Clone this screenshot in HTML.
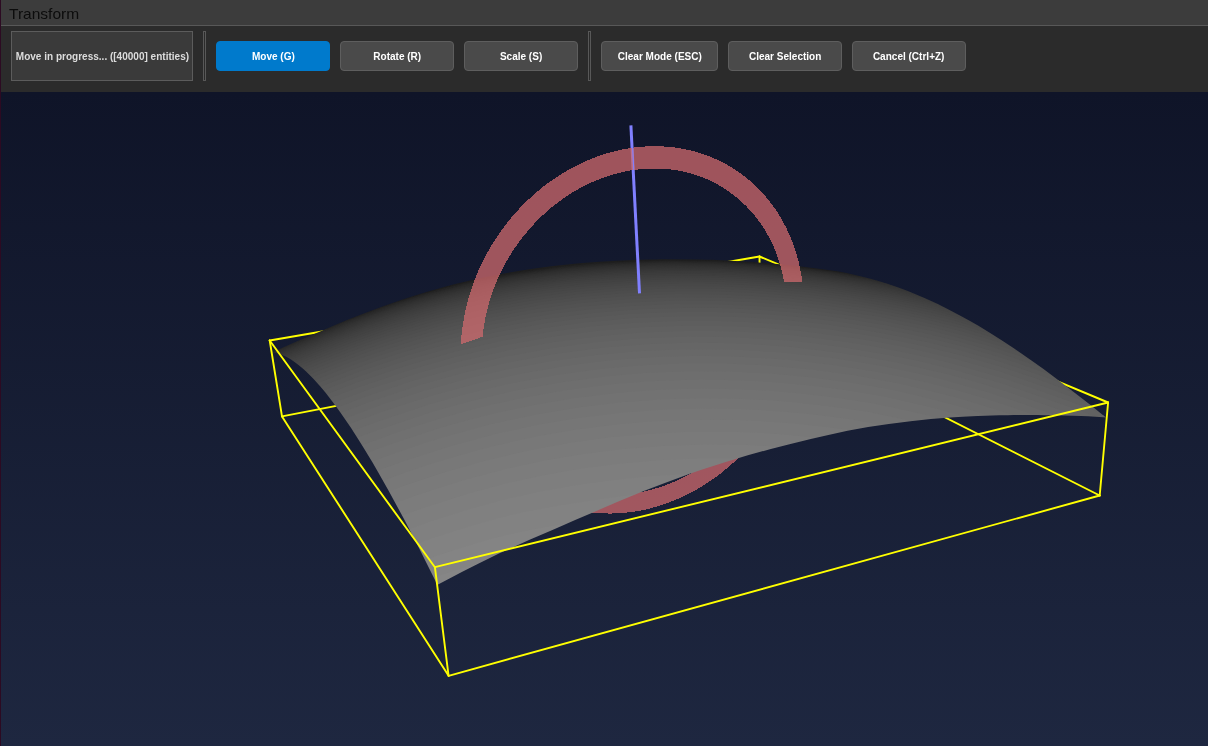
<!DOCTYPE html>
<html><head><meta charset="utf-8"><title>Transform</title>
<style>
html,body{margin:0;padding:0;background:#2b2b2b;}
body{width:1208px;height:746px;overflow:hidden;position:relative;font-family:"Liberation Sans",sans-serif;}
.edge{position:absolute;left:0;top:0;width:1px;height:746px;background:#2c0a22;z-index:5;}
.title{position:absolute;left:0;top:0;width:1208px;height:25px;background:#3c3c3c;border-bottom:1px solid #585858;box-sizing:content-box;}
.title span{position:absolute;left:9px;top:4.8px;font-size:14.5px;line-height:18px;color:#0c0c0c;display:inline-block;transform:scaleX(1.07);transform-origin:0 50%;}
.bar{position:absolute;left:0;top:26px;width:1208px;height:66px;background:#2b2b2b;}
.lbl{position:absolute;left:11px;top:5px;width:180px;height:48px;border:1px solid #5c5c5c;background:#3a3a3a;color:#dcdcdc;}
.sep{position:absolute;top:5px;width:1px;height:48px;border:1px solid #585858;background:#2b2b2b;}
.btn{position:absolute;top:15px;height:28px;border:1px solid #5e5e5e;border-radius:4px;background:#4a4a4a;color:#fff;}
.btn.on{background:#007acc;border-color:#007acc;}
.t{position:absolute;left:0;right:0;top:50%;margin-top:-8px;line-height:16px;height:16px;display:flex;justify-content:center;font-weight:bold;font-size:11.4px;white-space:nowrap;}
.t i{font-style:normal;display:inline-block;transform:scaleX(0.88);transform-origin:50% 50%;}
.scene{position:absolute;left:0;top:92px;display:block;}
</style></head><body>
<div class="title"><span>Transform</span></div>
<div class="bar">
<div class="lbl"><div class="t"><i>Move in progress... ([40000] entities)</i></div></div>
<div class="sep" style="left:203px"></div>
<div class="btn on" style="left:216px;width:112px"><div class="t"><i>Move (G)</i></div></div>
<div class="btn" style="left:340px;width:112px"><div class="t"><i>Rotate (R)</i></div></div>
<div class="btn" style="left:464px;width:112px"><div class="t"><i>Scale (S)</i></div></div>
<div class="sep" style="left:588px"></div>
<div class="btn" style="left:601px;width:115px"><div class="t"><i>Clear Mode (ESC)</i></div></div>
<div class="btn" style="left:728px;width:112px"><div class="t"><i>Clear Selection</i></div></div>
<div class="btn" style="left:852px;width:112px"><div class="t"><i>Cancel (Ctrl+Z)</i></div></div>
</div>
<svg class="scene" width="1208" height="654" viewBox="0 92 1208 654">
<defs><linearGradient id="bg" x1="0" y1="92" x2="0" y2="746" gradientUnits="userSpaceOnUse"><stop offset="0" stop-color="#0f1428"/><stop offset="1" stop-color="#1e2740"/></linearGradient>
<mask id="sc" maskUnits="userSpaceOnUse" x="250" y="240" width="880" height="370"><polygon points="271.83,352.59 274.52,352.70 274.85,352.87 276.17,353.05 278.50,353.64 282.17,354.91 286.17,356.74 290.17,358.99 293.83,361.38 298.17,364.63 302.17,367.96 305.83,371.32 313.14,378.60 320.33,386.56 325.62,392.87 329.83,398.18 335.37,405.50 340.21,412.17 350.93,427.83 359.50,441.17 364.47,449.17 372.70,462.83 378.15,472.17 388.35,490.17 403.70,518.50 416.74,543.50 435.73,581.49 435.90,582.15 436.46,583.12 436.50,583.45 436.79,583.78 436.82,584.12 437.14,584.47 437.17,584.83 437.53,584.81 437.88,584.48 438.22,584.45 438.55,584.16 439.53,583.78 461.83,572.09 476.17,564.80 499.50,553.21 530.17,539.53 554.17,529.22 575.17,519.97 595.83,511.17 619.50,500.96 642.50,491.50 666.17,482.44 689.17,474.09 701.50,469.86 724.17,462.48 747.83,455.31 770.83,448.97 789.50,444.15 811.83,438.72 829.50,434.69 847.50,430.86 868.17,427.08 888.83,423.97 910.50,421.15 930.83,419.05 950.17,417.53 962.50,416.74 977.50,415.99 999.50,415.29 1007.50,415.34 1013.50,415.01 1037.83,414.89 1044.50,415.16 1052.50,415.19 1073.50,415.67 1088.17,416.16 1103.15,417.15 1103.47,417.34 1105.83,417.42 1104.78,416.40 1104.45,416.34 1103.15,415.12 1102.82,414.97 1091.17,405.56 1080.83,397.50 1069.17,388.46 1055.17,377.74 1043.50,369.04 1031.83,360.67 1014.17,348.54 1003.17,341.27 990.17,332.99 978.83,326.11 970.50,321.32 961.83,316.47 949.50,309.88 937.83,304.11 924.50,298.06 907.83,291.10 899.83,288.12 887.50,283.85 876.83,280.54 869.50,278.46 860.50,276.14 847.83,273.32 838.83,271.60 831.83,270.46 820.83,268.88 807.17,267.15 795.17,265.79 782.50,264.52 768.83,263.31 753.17,262.09 739.17,261.17 727.17,260.55 711.50,259.81 704.83,259.73 699.17,259.41 661.17,259.22 655.83,259.46 649.17,259.44 633.50,259.96 616.83,260.74 599.50,261.75 582.17,263.09 569.50,264.27 550.83,266.30 536.17,268.26 521.17,270.51 506.83,272.93 486.83,276.81 472.17,279.99 453.17,284.61 445.83,286.51 426.50,291.99 414.17,295.74 401.83,299.70 382.50,306.40 359.83,314.91 345.83,320.56 332.83,326.01 316.50,332.92 302.83,338.72 283.50,347.30 274.52,351.50 273.87,351.63 272.89,352.22 272.55,352.24 272.20,352.57" fill="#fff"/></mask></defs>
<rect x="0" y="92" width="1208" height="654" fill="url(#bg)"/>
<g stroke="#ffff00" stroke-width="1.9" fill="none" stroke-linecap="round">
<line x1="759.5" y1="256.5" x2="269.7" y2="340.5" />
<line x1="759.5" y1="256.5" x2="1108.1" y2="402.5" />
<line x1="759.5" y1="256.5" x2="759.9" y2="323.8" />
<line x1="282.0" y1="416.4" x2="759.9" y2="323.8" />
<line x1="1099.7" y1="495.5" x2="759.9" y2="323.8" />
</g>
<polygon points="460.8,344.4 460.7,348.6 460.6,352.8 460.6,356.9 460.7,361.0 460.9,365.2 461.2,369.2 461.6,373.3 462.0,377.3 462.6,381.3 463.2,385.3 463.9,389.2 464.7,393.1 465.6,397.0 466.6,400.8 467.6,404.6 468.7,408.4 470.0,412.1 471.2,415.7 472.6,419.3 474.1,422.9 475.6,426.4 477.2,429.8 478.9,433.2 480.6,436.6 482.4,439.8 484.3,443.1 486.3,446.2 488.3,449.3 490.4,452.4 492.5,455.3 494.8,458.3 497.0,461.1 499.4,463.9 501.8,466.6 504.2,469.2 506.8,471.8 509.3,474.3 512.0,476.7 514.7,479.1 517.4,481.4 520.2,483.6 523.0,485.7 525.9,487.7 528.8,489.7 531.7,491.6 534.7,493.4 537.8,495.2 540.9,496.9 544.0,498.5 547.1,500.0 550.3,501.4 553.5,502.8 556.8,504.0 560.1,505.2 563.4,506.3 566.7,507.4 570.1,508.3 573.4,509.2 576.8,510.0 580.3,510.7 583.7,511.3 587.1,511.9 590.6,512.4 594.1,512.7 597.6,513.1 601.1,513.3 604.6,513.4 608.1,513.5 611.6,513.5 615.2,513.4 618.7,513.3 622.2,513.0 625.8,512.7 629.3,512.3 632.8,511.8 636.3,511.3 639.9,510.7 643.4,510.0 646.9,509.2 650.4,508.3 653.9,507.4 657.3,506.4 660.8,505.3 664.2,504.2 667.6,503.0 671.0,501.7 674.4,500.4 677.8,498.9 681.1,497.5 684.5,495.9 687.8,494.3 691.0,492.6 694.3,490.8 697.5,489.0 700.7,487.1 703.8,485.2 707.0,483.2 710.1,481.1 713.1,479.0 716.2,476.8 719.2,474.6 722.1,472.3 725.0,469.9 727.9,467.5 730.8,465.0 733.6,462.5 736.3,459.9 739.0,457.3 741.7,454.6 744.3,451.9 746.9,449.1 749.5,446.3 751.9,443.4 754.4,440.5 756.8,437.5 759.1,434.5 761.4,431.5 763.6,428.4 765.8,425.3 768.0,422.1 770.0,418.9 772.1,415.7 774.0,412.4 775.9,409.1 777.8,405.7 779.6,402.4 781.3,399.0 783.0,395.5 784.6,392.1 786.2,388.6 787.7,385.1 789.1,381.5 790.5,378.0 791.8,374.4 793.0,370.8 794.2,367.2 795.3,363.5 796.3,359.9 797.3,356.2 798.2,352.5 799.1,348.9 799.9,345.1 800.6,341.4 801.2,337.7 801.8,334.0 802.3,330.3 802.7,326.5 803.1,322.8 803.4,319.0 803.6,315.3 803.7,311.6 803.8,307.8 803.8,304.1 803.8,300.4 803.6,296.7 803.4,293.0 803.1,289.3 802.8,285.6 802.3,281.9 784.1,281.9 784.6,285.2 785.1,288.5 785.5,291.9 785.8,295.2 786.1,298.6 786.3,302.0 786.4,305.4 786.5,308.8 786.5,312.2 786.4,315.6 786.2,319.0 786.0,322.4 785.7,325.8 785.4,329.3 785.0,332.7 784.5,336.1 784.0,339.5 783.4,342.9 782.7,346.3 781.9,349.7 781.1,353.0 780.3,356.4 779.4,359.8 778.4,363.1 777.3,366.4 776.2,369.7 775.0,373.0 773.8,376.3 772.5,379.5 771.2,382.7 769.7,385.9 768.3,389.1 766.8,392.3 765.2,395.4 763.5,398.5 761.8,401.5 760.1,404.6 758.3,407.6 756.4,410.5 754.5,413.5 752.6,416.4 750.6,419.2 748.5,422.0 746.4,424.8 744.3,427.6 742.1,430.3 739.8,432.9 737.5,435.6 735.2,438.1 732.8,440.7 730.4,443.1 727.9,445.6 725.4,448.0 722.9,450.3 720.3,452.6 717.7,454.8 715.0,457.0 712.3,459.1 709.6,461.2 706.8,463.2 704.0,465.2 701.2,467.1 698.3,469.0 695.5,470.7 692.5,472.5 689.6,474.2 686.6,475.8 683.6,477.3 680.6,478.8 677.6,480.2 674.5,481.6 671.5,482.9 668.4,484.1 665.2,485.3 662.1,486.4 659.0,487.4 655.8,488.4 652.6,489.3 649.5,490.1 646.3,490.9 643.1,491.6 639.8,492.2 636.6,492.7 633.4,493.2 630.2,493.6 627.0,493.9 623.7,494.2 620.5,494.4 617.3,494.5 614.1,494.5 610.9,494.5 607.7,494.4 604.5,494.2 601.3,493.9 598.1,493.6 594.9,493.2 591.8,492.7 588.7,492.2 585.5,491.5 582.4,490.8 579.4,490.0 576.3,489.2 573.3,488.2 570.3,487.2 567.3,486.1 564.3,485.0 561.4,483.8 558.5,482.5 555.6,481.1 552.8,479.6 550.0,478.1 547.2,476.5 544.5,474.8 541.8,473.1 539.2,471.3 536.6,469.4 534.0,467.5 531.5,465.4 529.1,463.3 526.7,461.2 524.3,459.0 522.0,456.7 519.7,454.3 517.5,451.9 515.3,449.4 513.2,446.9 511.2,444.3 509.2,441.6 507.3,438.9 505.4,436.1 503.6,433.3 501.9,430.4 500.2,427.4 498.6,424.4 497.1,421.3 495.6,418.2 494.2,415.1 492.9,411.9 491.6,408.6 490.4,405.3 489.3,402.0 488.3,398.6 487.3,395.2 486.4,391.8 485.6,388.3 484.9,384.8 484.2,381.2 483.7,377.6 483.2,374.0 482.7,370.4 482.4,366.7 482.1,363.0 482.0,359.3 481.9,355.6 481.9,351.9 481.9,348.1 482.1,344.3 482.3,340.5 482.6,336.8" fill="rgba(207,106,109,0.75)" shape-rendering="crispEdges"/>
<g mask="url(#sc)">
<rect x="250" y="240" width="880" height="370" fill="#1e1e1e"/>
<polygon points="665.5,260.2 636.2,260.9 601.8,262.7 572.5,265.1 540.5,268.8 503.8,274.5 463.5,282.8 435.8,289.7 416.5,295.5 415.5,295.1 415.2,295.8 413.2,296.5 412.2,296.2 410.8,297.2 409.8,296.8 408.5,297.8 407.8,297.5 407.5,298.2 406.5,297.5 406.2,298.5 405.5,297.9 405.2,298.9 404.5,298.2 404.2,299.2 403.2,298.6 402.8,299.6 402.2,298.9 401.8,299.9 401.2,299.3 400.8,300.3 400.2,299.6 399.8,300.6 398.8,299.6 397.8,297.0 361.2,310.2 316.5,328.8 273.8,347.6 271.8,348.6 267.8,352.6 271.8,356.6 274.5,356.6 280.2,357.9 288.2,361.6 293.5,365.0 300.8,370.6 311.5,380.9 316.5,386.6 335.2,410.5 356.5,442.5 374.5,472.5 406.5,531.2 433.2,584.8 437.2,588.8 471.5,571.0 530.8,543.1 573.8,524.4 622.2,503.7 666.5,486.2 703.5,473.1 746.8,459.4 787.5,448.5 829.2,438.6 866.8,431.1 910.2,425.0 945.8,421.7 971.2,420.1 997.8,419.2 1041.8,418.9 1074.8,419.6 1105.8,421.4 1109.8,417.4 1104.8,412.4 1088.8,399.5 1053.2,372.0 1024.8,351.6 995.5,332.2 962.8,312.9 936.2,299.2 910.8,288.1 889.2,280.3 870.8,274.7 848.2,269.2 846.8,269.3 846.5,271.3 845.2,273.0 844.8,270.0 844.2,272.3 843.2,272.7 842.8,271.0 842.2,272.4 841.2,272.4 807.2,267.7 760.2,263.3 713.5,260.8" fill="#202020"/>
<polygon points="667.5,260.6 619.8,262.1 595.2,263.6 564.8,266.3 520.5,272.1 490.8,277.4 465.2,282.8 423.8,293.4 392.5,303.4 391.5,303.1 391.2,303.7 389.5,303.7 389.2,304.4 387.5,304.4 387.2,305.1 386.5,304.8 386.2,305.5 384.5,305.5 384.2,306.2 383.5,305.8 382.2,306.9 381.2,306.2 380.8,307.2 380.2,306.5 379.8,307.5 379.2,306.9 378.8,307.9 376.8,304.6 373.2,305.6 338.5,319.5 302.5,334.7 271.8,348.6 267.8,352.6 271.8,356.6 274.5,356.6 280.2,357.9 288.2,361.6 293.5,365.0 300.8,370.6 311.5,380.9 316.5,386.6 335.2,410.5 356.5,442.5 374.5,472.5 406.5,531.2 433.2,584.8 437.2,588.8 471.5,571.0 530.8,543.1 573.8,524.4 622.2,503.7 666.5,486.2 703.5,473.1 746.8,459.4 787.5,448.5 829.2,438.6 866.8,431.1 910.2,425.0 945.8,421.7 971.2,420.1 997.8,419.2 1041.8,418.9 1074.8,419.6 1105.8,421.4 1109.8,417.4 1104.8,412.4 1088.8,399.5 1053.2,372.0 1024.8,351.6 995.5,332.2 962.8,312.9 936.2,299.2 910.8,288.1 889.2,280.3 870.8,274.7 852.2,270.1 851.2,270.2 850.2,273.5 849.2,273.9 848.8,272.9 848.5,273.6 847.5,273.6 847.2,272.6 846.8,273.3 845.5,273.3 807.5,268.0 760.2,263.6 712.8,261.1" fill="#222222"/>
<polygon points="674.5,260.9 647.2,261.4 621.5,262.4 592.8,264.2 568.5,266.3 523.2,272.2 471.5,281.8 441.5,289.0 411.5,297.5 382.5,306.8 364.5,313.5 363.8,313.2 363.5,313.8 361.8,313.9 361.5,314.6 360.2,314.6 359.8,315.3 359.2,314.9 358.8,315.6 358.2,315.3 357.8,316.0 357.2,315.3 356.8,316.3 356.2,315.7 356.2,316.4 355.5,316.4 355.2,317.0 354.5,316.4 354.2,317.4 353.5,316.8 353.2,317.8 351.2,314.5 351.8,316.5 351.5,318.5 349.5,315.2 348.8,315.2 316.5,328.8 283.2,343.3 271.8,348.6 267.8,352.6 271.8,356.6 274.5,356.6 280.2,357.9 288.2,361.6 293.5,365.0 300.8,370.6 311.5,380.9 316.5,386.6 335.2,410.5 356.5,442.5 374.5,472.5 406.5,531.2 433.2,584.8 437.2,588.8 471.5,571.0 530.8,543.1 573.8,524.4 622.2,503.7 666.5,486.2 703.5,473.1 746.8,459.4 787.5,448.5 829.2,438.6 866.8,431.1 910.2,425.0 945.8,421.7 971.2,420.1 997.8,419.2 1041.8,418.9 1074.8,419.6 1105.8,421.4 1109.8,417.4 1104.8,412.4 1088.8,399.5 1053.2,372.0 1024.8,351.6 995.5,332.2 962.8,312.9 936.2,299.2 910.8,288.1 892.8,281.5 875.2,275.9 856.2,271.0 855.2,271.1 854.2,274.4 853.2,274.8 852.8,273.8 852.5,274.5 851.2,274.5 835.2,271.9 814.8,269.2 767.5,264.6 720.2,261.8" fill="#242424"/>
<polygon points="663.5,261.5 636.2,262.3 610.2,263.5 559.5,267.8 511.2,274.7 466.5,283.5 428.5,293.1 394.5,303.3 358.5,316.0 337.5,324.5 335.8,324.5 335.5,325.2 334.2,325.2 333.8,325.9 333.2,325.6 332.2,326.6 330.8,326.7 330.5,327.3 329.8,326.7 329.5,327.7 327.5,324.4 328.2,326.4 327.8,328.4 325.8,325.1 326.5,328.8 326.2,329.1 325.2,328.1 324.2,325.8 324.8,327.8 324.5,329.8 322.5,326.5 320.5,327.1 273.8,347.6 271.8,348.6 267.8,352.6 271.8,356.6 274.5,356.6 280.2,357.9 288.2,361.6 293.5,365.0 300.8,370.6 311.5,380.9 316.5,386.6 335.2,410.5 356.5,442.5 374.5,472.5 406.5,531.2 433.2,584.8 437.2,588.8 471.5,571.0 530.8,543.1 573.8,524.4 622.2,503.7 666.5,486.2 703.5,473.1 746.8,459.4 787.5,448.5 829.2,438.6 866.8,431.1 910.2,425.0 945.8,421.7 971.2,420.1 997.8,419.2 1041.8,418.9 1074.8,419.6 1105.8,421.4 1109.8,417.4 1104.8,412.4 1088.8,399.5 1053.2,372.0 1024.8,351.6 995.5,332.2 962.8,312.9 936.2,299.2 910.8,288.1 889.2,280.3 861.5,272.2 860.5,272.3 859.5,275.6 858.5,276.0 858.2,275.0 857.8,275.7 856.8,275.7 836.8,272.5 811.8,269.3 770.2,265.2 743.8,263.4 716.5,262.1" fill="#262626"/>
<polygon points="659.5,262.2 609.2,264.2 561.5,268.2 518.2,274.1 470.5,283.2 425.8,294.4 385.8,306.8 343.5,322.3 310.8,335.7 310.2,335.4 309.2,336.4 308.5,336.1 308.2,336.7 306.8,336.7 306.5,337.4 306.2,337.1 305.2,338.1 304.5,337.7 303.5,338.7 302.8,338.0 302.8,338.7 302.2,338.7 301.8,339.4 301.5,339.0 301.2,339.7 299.2,336.4 299.8,338.4 299.5,340.4 297.5,337.0 296.5,337.4 271.8,348.6 267.8,352.6 271.8,356.6 274.5,356.6 280.2,357.9 288.2,361.6 293.5,365.0 300.8,370.6 311.5,380.9 316.5,386.6 335.2,410.5 356.5,442.5 374.5,472.5 406.5,531.2 433.2,584.8 437.2,588.8 471.5,571.0 530.8,543.1 573.8,524.4 622.2,503.7 666.5,486.2 703.5,473.1 746.8,459.4 787.5,448.5 829.2,438.6 866.8,431.1 910.2,425.0 945.8,421.7 971.2,420.1 997.8,419.2 1041.8,418.9 1074.8,419.6 1105.8,421.4 1109.8,417.4 1104.8,412.4 1088.8,399.5 1053.2,372.0 1024.8,351.6 995.5,332.2 962.8,312.9 936.2,299.2 910.8,288.1 889.2,280.3 866.2,273.4 865.5,273.8 864.5,276.8 863.5,277.2 863.2,276.2 862.8,276.9 861.5,276.9 840.2,273.4 813.2,269.9 771.8,265.8 746.2,264.1 719.8,262.8" fill="#282828"/>
<polygon points="676.8,262.6 648.5,263.1 622.8,264.1 572.2,267.8 544.8,270.9 518.2,274.8 488.8,280.0 464.8,285.1 436.8,292.0 411.8,299.2 385.8,307.5 353.5,319.1 309.2,336.7 280.8,349.0 280.2,348.6 279.8,349.3 279.5,349.0 277.8,350.3 277.2,349.9 274.8,351.6 274.2,350.9 273.8,351.9 273.5,351.6 273.2,352.3 272.2,352.3 272.2,356.6 276.5,356.9 283.5,359.3 291.5,363.6 300.8,370.6 311.5,380.9 316.5,386.6 326.5,398.9 336.8,412.8 356.5,442.5 378.5,479.5 406.5,531.2 433.2,584.8 437.2,588.8 471.5,571.0 530.8,543.1 573.8,524.4 622.2,503.7 666.5,486.2 703.5,473.1 746.8,459.4 787.5,448.5 829.2,438.6 866.8,431.1 910.2,425.0 945.8,421.7 971.2,420.1 997.8,419.2 1041.8,418.9 1074.8,419.6 1105.8,421.4 1109.8,417.4 1104.8,412.4 1088.8,399.5 1053.2,372.0 1024.8,351.6 995.5,332.2 962.8,312.9 936.2,299.2 910.8,288.1 889.2,280.3 871.8,275.0 871.2,275.0 870.8,277.0 869.5,278.7 869.2,277.7 868.8,278.4 867.8,278.4 828.2,272.3 776.2,266.8 729.2,263.8" fill="#2a2a2a"/>
<polygon points="660.5,263.5 609.8,265.5 584.8,267.4 557.2,270.1 509.5,277.0 458.2,287.4 437.2,292.7 403.2,302.6 362.2,316.5 344.5,323.3 306.8,338.4 273.5,352.6 273.5,356.6 280.2,357.9 288.2,361.6 295.8,366.6 303.5,373.0 311.5,380.9 318.2,388.6 336.8,412.8 356.5,442.5 378.5,479.5 406.5,531.2 433.2,584.8 437.2,588.8 471.5,571.0 530.8,543.1 573.8,524.4 622.2,503.7 666.5,486.2 703.5,473.1 746.8,459.4 787.5,448.5 829.2,438.6 866.8,431.1 910.2,425.0 945.8,421.7 971.2,420.1 997.8,419.2 1041.8,418.9 1074.8,419.6 1105.8,421.4 1109.8,417.4 1104.8,412.4 1088.8,399.5 1053.2,372.0 1024.8,351.6 995.5,332.2 962.8,312.9 936.2,299.2 910.8,288.1 889.2,280.3 877.2,276.5 875.8,279.9 875.2,280.2 874.8,278.6 874.2,279.9 873.5,279.9 855.2,276.7 819.2,271.8 795.5,269.2 765.2,266.6 735.5,264.8 710.2,263.8" fill="#2c2c2c"/>
<polygon points="666.2,264.2 616.2,266.0 586.2,268.1 560.8,270.5 533.5,274.0 506.8,278.3 457.5,288.4 429.2,295.8 401.5,303.9 353.2,320.8 323.8,332.5 280.5,350.3 274.8,352.9 274.2,353.6 273.5,356.6 280.2,357.9 288.2,361.6 295.8,366.6 303.5,373.0 311.5,380.9 318.2,388.6 336.8,412.8 356.5,442.5 378.5,479.5 406.5,531.2 433.2,584.8 437.2,588.8 471.5,571.0 530.8,543.1 573.8,524.4 622.2,503.7 666.5,486.2 703.5,473.1 746.8,459.4 787.5,448.5 829.2,438.6 866.8,431.1 910.2,425.0 945.8,421.7 971.2,420.1 997.8,419.2 1041.8,418.9 1074.8,419.6 1105.8,421.4 1109.8,417.4 1104.8,412.4 1088.8,399.5 1053.2,372.0 1024.8,351.6 995.5,332.2 962.8,312.9 936.2,299.2 910.8,288.1 889.2,280.3 882.2,278.1 880.8,281.4 880.2,281.8 879.8,280.8 879.5,281.5 878.5,281.5 858.8,278.0 828.2,273.7 797.8,270.1 764.2,267.3 717.8,264.8" fill="#2e2e2e"/>
<polygon points="661.2,265.2 610.5,267.2 560.2,271.5 537.2,274.4 506.5,279.3 455.8,289.8 426.5,297.4 400.2,305.3 369.2,315.7 346.5,324.3 311.8,338.1 276.5,352.9 275.5,356.9 280.2,357.9 288.2,361.6 295.8,366.6 303.5,373.0 311.5,380.9 321.5,392.5 339.2,416.2 356.5,442.5 378.5,479.5 406.5,531.2 433.2,584.8 437.2,588.8 471.5,571.0 530.8,543.1 573.8,524.4 622.2,503.7 666.5,486.2 703.5,473.1 746.8,459.4 787.5,448.5 829.2,438.6 866.8,431.1 910.2,425.0 945.8,421.7 971.2,420.1 997.8,419.2 1041.8,418.9 1074.8,419.6 1105.8,421.4 1109.8,417.4 1104.8,412.4 1088.8,399.5 1053.2,372.0 1024.8,351.6 995.5,332.2 962.8,312.9 936.2,299.2 910.8,288.1 889.2,280.3 887.2,279.6 885.8,283.0 884.8,283.3 854.5,278.1 817.8,273.2 787.5,269.9 757.5,267.6 711.2,265.4" fill="#303030"/>
<polygon points="678.5,265.9 650.2,266.4 624.2,267.4 573.5,271.1 521.2,277.8 489.8,283.4 467.2,288.2 440.2,294.7 412.5,302.5 378.2,313.6 354.8,322.1 318.5,336.4 279.5,352.6 277.5,354.3 276.8,357.3 280.2,357.9 288.2,361.6 295.8,366.6 303.5,373.0 311.5,380.9 321.5,392.5 339.2,416.2 356.5,442.5 378.5,479.5 406.5,531.2 433.2,584.8 437.2,588.8 471.5,571.0 530.8,543.1 573.8,524.4 622.2,503.7 666.5,486.2 703.5,473.1 746.8,459.4 787.5,448.5 829.2,438.6 866.8,431.1 910.2,425.0 945.8,421.7 971.2,420.1 997.8,419.2 1041.8,418.9 1074.8,419.6 1105.8,421.4 1109.8,417.4 1104.8,412.4 1088.8,399.5 1053.2,372.0 1031.2,356.0 1003.5,337.3 978.8,322.0 952.2,307.1 926.2,294.6 895.5,282.4 893.5,282.2 892.8,284.5 891.8,285.5 891.5,284.5 891.2,285.2 890.5,285.2 866.5,280.8 830.5,275.6 803.2,272.4 774.8,269.8 723.2,266.8" fill="#323232"/>
<polygon points="662.8,267.2 611.5,269.2 563.5,273.2 512.5,280.4 487.2,285.0 459.2,291.1 409.5,304.5 388.8,311.1 355.2,323.1 322.2,336.1 283.5,352.0 279.2,353.9 278.5,354.6 277.8,357.3 283.5,359.3 291.5,363.6 303.5,373.0 311.5,380.9 321.5,392.5 339.2,416.2 356.5,442.5 378.5,479.5 406.5,531.2 433.2,584.8 437.2,588.8 471.5,571.0 530.8,543.1 573.8,524.4 622.2,503.7 666.5,486.2 703.5,473.1 746.8,459.4 787.5,448.5 829.2,438.6 866.8,431.1 910.2,425.0 945.8,421.7 971.2,420.1 997.8,419.2 1041.8,418.9 1074.8,419.6 1105.8,421.4 1109.8,417.4 1104.8,412.4 1088.8,399.5 1053.2,372.0 1031.2,356.0 1003.5,337.3 978.8,322.0 952.2,307.1 926.2,294.6 900.8,284.3 898.8,284.0 897.8,287.1 897.2,287.4 896.8,286.4 896.5,287.1 895.5,287.1 872.2,282.6 832.8,276.9 797.5,272.8 762.8,269.9 711.5,267.4" fill="#343434"/>
<polygon points="670.2,268.2 623.2,269.7 573.2,273.4 545.8,276.6 521.2,280.2 489.8,285.7 467.2,290.5 441.5,296.7 414.8,304.2 388.5,312.5 361.5,321.9 320.2,338.1 285.5,352.3 281.2,354.3 279.2,357.9 283.5,359.3 293.5,365.0 300.8,370.6 307.8,377.3 316.5,386.6 324.2,395.9 342.8,421.5 360.8,449.5 378.5,479.5 406.5,531.2 433.2,584.8 437.2,588.8 471.5,571.0 530.8,543.1 573.8,524.4 622.2,503.7 666.5,486.2 703.5,473.1 746.8,459.4 787.5,448.5 829.2,438.6 866.8,431.1 910.2,425.0 945.8,421.7 971.2,420.1 997.8,419.2 1041.8,418.9 1074.8,419.6 1105.8,421.4 1109.8,417.4 1104.8,412.4 1092.2,402.2 1055.8,374.0 1031.2,356.0 1007.2,339.7 984.5,325.4 958.5,310.5 930.5,296.6 905.8,286.2 904.8,286.2 903.8,289.3 903.2,289.6 877.2,284.5 841.2,279.1 802.5,274.4 773.5,271.8 746.8,270.0 718.2,268.7" fill="#363636"/>
<polygon points="666.8,269.5 617.8,271.3 567.5,275.3 519.2,281.8 488.2,287.4 467.2,291.9 441.5,298.1 414.8,305.5 387.5,314.2 361.5,323.2 320.2,339.4 285.5,353.6 282.5,355.0 281.2,358.6 288.2,361.6 295.8,366.6 303.5,373.0 311.5,380.9 326.5,398.9 342.8,421.5 360.8,449.5 378.5,479.5 406.5,531.2 433.2,584.8 437.2,588.8 471.5,571.0 530.8,543.1 573.8,524.4 622.2,503.7 666.5,486.2 703.5,473.1 746.8,459.4 787.5,448.5 829.2,438.6 866.8,431.1 910.2,425.0 945.8,421.7 971.2,420.1 997.8,419.2 1041.8,418.9 1074.8,419.6 1105.8,421.4 1109.8,417.4 1104.8,412.4 1092.2,402.2 1055.8,374.0 1031.2,356.0 1007.2,339.7 984.5,325.4 958.5,310.5 936.2,299.2 911.5,288.5 909.8,291.5 908.5,291.8 878.2,285.8 842.2,280.4 809.2,276.3 774.8,273.1 748.5,271.3 720.8,270.1" fill="#383838"/>
<polygon points="669.2,270.8 640.5,271.5 614.2,272.9 568.2,276.7 517.8,283.5 466.2,293.6 438.2,300.5 411.8,307.9 386.8,315.8 356.2,326.7 320.5,340.8 285.8,355.0 284.5,355.6 282.8,359.3 288.2,361.6 295.8,366.6 303.5,373.0 311.5,380.9 326.5,398.9 342.8,421.5 360.8,449.5 378.5,479.5 406.5,531.2 433.2,584.8 437.2,588.8 471.5,571.0 530.8,543.1 573.8,524.4 622.2,503.7 666.5,486.2 703.5,473.1 746.8,459.4 787.5,448.5 829.2,438.6 866.8,431.1 910.2,425.0 945.8,421.7 971.2,420.1 997.8,419.2 1041.8,418.9 1074.8,419.6 1105.8,421.4 1109.8,417.4 1099.2,407.7 1070.5,385.2 1043.5,364.8 1012.8,343.5 987.8,327.4 962.8,312.9 936.2,299.2 917.8,291.1 916.2,294.1 914.8,294.4 893.5,289.8 850.8,282.8 817.2,278.5 782.2,274.9 758.5,273.2 729.2,271.7 707.8,271.0" fill="#3a3a3a"/>
<polygon points="651.8,272.6 626.2,273.7 597.2,275.5 572.5,277.7 522.8,284.2 471.5,293.9 442.8,300.8 411.5,309.6 364.5,325.2 328.8,339.0 296.5,352.0 285.8,356.6 284.2,359.6 291.5,363.6 298.8,369.0 311.5,380.9 326.5,398.9 342.8,421.5 360.8,449.5 378.5,479.5 406.5,531.2 433.2,584.8 437.2,588.8 471.5,571.0 530.8,543.1 573.8,524.4 622.2,503.7 666.5,486.2 703.5,473.1 746.8,459.4 787.5,448.5 829.2,438.6 866.8,431.1 910.2,425.0 945.8,421.7 971.2,420.1 997.8,419.2 1041.8,418.9 1074.8,419.6 1105.8,421.4 1109.8,417.4 1099.2,407.7 1070.5,385.2 1043.5,364.8 1012.8,343.5 987.8,327.4 962.8,312.9 936.2,299.2 924.5,294.0 923.8,294.0 922.8,297.0 922.2,297.3 890.2,290.6 854.5,284.7 826.5,281.0 791.2,277.1 761.5,274.8 733.8,273.3 698.5,272.2" fill="#3c3c3c"/>
<polygon points="674.5,273.8 625.5,275.3 575.2,279.1 522.8,285.9 474.5,295.0 426.8,306.9 396.2,316.1 369.5,325.1 329.8,340.3 303.8,350.7 288.2,357.3 286.2,360.6 291.5,363.6 298.8,369.0 311.5,380.9 326.5,398.9 336.8,412.8 348.2,429.5 369.8,464.5 384.5,490.2 411.8,541.5 433.2,584.8 437.2,588.8 471.5,571.0 530.8,543.1 573.8,524.4 622.2,503.7 666.5,486.2 703.5,473.1 746.8,459.4 787.5,448.5 829.2,438.6 866.8,431.1 910.2,425.0 945.8,421.7 971.2,420.1 997.8,419.2 1041.8,418.9 1074.8,419.6 1105.8,421.4 1109.8,417.4 1099.2,407.7 1070.5,385.2 1049.5,369.2 1024.8,351.6 1003.5,337.3 978.8,322.0 952.2,307.1 931.2,296.9 929.5,299.9 928.5,300.3 897.5,293.4 863.2,287.5 827.5,282.6 789.2,278.5 762.8,276.5 735.8,274.9 704.2,273.9" fill="#3e3e3e"/>
<polygon points="679.8,275.4 632.5,276.7 581.8,280.2 557.8,282.8 527.5,287.0 478.2,296.0 446.2,303.6 423.8,309.6 397.8,317.4 365.2,328.5 333.8,340.6 295.5,356.0 289.5,358.6 287.8,361.6 293.5,365.0 300.8,370.6 314.2,383.9 332.5,406.8 348.2,429.5 369.8,464.5 384.5,490.2 411.8,541.5 433.2,584.8 437.2,588.8 471.5,571.0 530.8,543.1 573.8,524.4 622.2,503.7 666.5,486.2 703.5,473.1 746.8,459.4 787.5,448.5 829.2,438.6 866.8,431.1 910.2,425.0 945.8,421.7 971.2,420.1 997.8,419.2 1041.8,418.9 1074.8,419.6 1105.8,421.4 1109.8,417.4 1099.2,407.7 1070.5,385.2 1049.5,369.2 1024.8,351.6 1003.5,337.3 978.8,322.0 958.5,310.5 938.2,300.2 936.8,303.2 935.8,303.5 905.5,296.6 872.5,290.6 836.8,285.4 798.5,281.0 766.8,278.4 741.5,276.9 717.2,275.9" fill="#404040"/>
<polygon points="671.2,277.3 620.5,279.2 593.5,281.1 562.2,284.2 512.2,291.5 469.2,300.0 442.2,306.6 412.2,315.0 365.2,330.6 333.8,342.6 293.2,359.0 291.8,359.6 290.2,363.0 295.8,366.6 303.5,373.0 316.5,386.6 332.5,406.8 348.2,429.5 369.8,464.5 384.5,490.2 411.8,541.5 433.2,584.8 437.2,588.8 471.5,571.0 530.8,543.1 573.8,524.4 622.2,503.7 666.5,486.2 703.5,473.1 746.8,459.4 787.5,448.5 829.2,438.6 866.8,431.1 910.2,425.0 945.8,421.7 971.2,420.1 997.8,419.2 1041.8,418.9 1074.8,419.6 1105.8,421.4 1109.8,417.4 1099.2,407.7 1070.5,385.2 1049.5,369.2 1024.8,351.6 1003.5,337.3 984.5,325.4 962.8,312.9 945.5,303.8 944.2,306.8 943.5,307.1 917.2,300.8 873.8,292.6 833.8,286.8 794.2,282.4 760.5,279.7 731.2,278.2 709.5,277.5" fill="#424242"/>
<polygon points="671.5,279.3 625.8,280.9 581.5,284.2 539.8,289.2 510.8,293.8 484.5,298.9 438.8,309.6 391.8,323.6 343.2,341.0 293.8,361.0 292.2,364.3 295.8,366.6 303.5,373.0 311.5,380.9 321.5,392.5 339.2,416.2 356.5,442.5 374.5,472.5 394.2,507.8 411.8,541.5 433.2,584.8 437.2,588.8 471.5,571.0 530.8,543.1 573.8,524.4 622.2,503.7 666.5,486.2 703.5,473.1 746.8,459.4 787.5,448.5 829.2,438.6 866.8,431.1 910.2,425.0 945.8,421.7 971.2,420.1 997.8,419.2 1041.8,418.9 1074.8,419.6 1105.8,421.4 1109.8,417.4 1104.8,412.4 1074.8,388.6 1053.2,372.0 1031.2,356.0 991.2,329.5 971.8,317.9 953.2,307.8 952.5,308.1 951.5,310.5 950.5,310.8 923.5,304.0 881.5,295.8 838.8,289.4 800.8,284.9 765.5,282.0 738.8,280.4 710.2,279.4" fill="#444444"/>
<polygon points="681.5,281.2 654.2,281.8 628.5,282.9 577.5,286.8 545.5,290.6 523.2,294.0 484.2,301.2 439.8,311.7 415.8,318.5 387.5,327.3 353.2,339.5 323.8,351.1 297.5,361.7 295.5,362.6 293.5,365.0 303.5,373.0 311.5,380.9 321.5,392.5 336.8,412.8 351.8,435.2 369.8,464.5 386.2,493.2 411.8,541.5 433.2,584.8 437.2,588.8 471.5,571.0 530.8,543.1 573.8,524.4 622.2,503.7 666.5,486.2 703.5,473.1 746.8,459.4 787.5,448.5 829.2,438.6 866.8,431.1 910.2,425.0 945.8,421.7 971.2,420.1 997.8,419.2 1041.8,418.9 1074.8,419.6 1105.8,421.4 1109.8,417.4 1104.8,412.4 1080.8,393.2 1037.8,360.8 1012.8,343.5 995.5,332.2 961.5,312.2 960.8,312.2 958.8,314.8 958.2,314.8 919.2,305.1 879.5,297.5 842.8,291.9 811.5,288.1 780.2,285.1 749.2,283.0 718.5,281.7" fill="#464646"/>
<polygon points="679.2,283.5 628.5,285.1 583.5,288.5 541.5,293.6 517.8,297.3 484.5,303.6 436.5,315.1 385.8,330.4 350.8,342.9 320.8,354.7 298.8,363.6 297.2,365.0 296.2,367.0 303.5,373.0 311.5,380.9 324.2,395.9 339.2,416.2 356.5,442.5 374.5,472.5 394.2,507.8 411.8,541.5 433.2,584.8 437.2,588.8 471.5,571.0 530.8,543.1 573.8,524.4 622.2,503.7 666.5,486.2 703.5,473.1 746.8,459.4 787.5,448.5 829.2,438.6 866.8,431.1 910.2,425.0 945.8,421.7 971.2,420.1 997.8,419.2 1041.8,418.9 1074.8,419.6 1105.8,421.4 1109.8,417.4 1104.8,412.4 1080.8,393.2 1043.5,364.8 1007.2,339.7 968.8,316.2 968.2,316.2 966.8,318.9 966.2,319.2 931.2,310.0 888.8,301.3 847.8,294.8 809.5,290.0 773.5,286.8 744.2,284.9 704.5,283.6" fill="#484848"/>
<polygon points="668.8,286.0 621.2,288.0 571.2,292.3 522.8,299.1 475.2,308.3 430.2,319.5 387.8,332.4 359.2,342.4 326.8,355.0 301.2,365.3 297.8,368.0 311.5,380.9 324.2,395.9 339.2,416.2 356.5,442.5 374.5,472.5 394.2,507.8 411.8,541.5 433.2,584.8 437.2,588.8 471.5,571.0 530.8,543.1 573.8,524.4 622.2,503.7 666.5,486.2 703.5,473.1 746.8,459.4 787.5,448.5 829.2,438.6 866.8,431.1 910.2,425.0 945.8,421.7 971.2,420.1 997.8,419.2 1041.8,418.9 1074.8,419.6 1105.8,421.4 1109.8,417.4 1104.8,412.4 1080.8,393.2 1043.5,364.8 1007.2,339.7 976.8,320.9 974.5,323.9 948.5,316.5 898.5,305.5 847.5,297.1 808.8,292.3 768.2,288.7 735.5,286.9 715.8,286.2" fill="#4a4a4a"/>
<polygon points="668.2,288.6 621.5,290.6 576.8,294.4 525.2,301.4 478.5,310.4 431.8,321.9 383.2,336.9 353.2,347.6 326.5,358.0 302.5,367.6 300.2,370.0 311.5,380.9 326.5,398.9 342.8,421.5 356.5,442.5 374.5,472.5 394.2,507.8 411.8,541.5 433.2,584.8 437.2,588.8 471.5,571.0 530.8,543.1 573.8,524.4 622.2,503.7 666.5,486.2 703.5,473.1 746.8,459.4 787.5,448.5 829.2,438.6 866.8,431.1 910.2,425.0 945.8,421.7 971.2,420.1 997.8,419.2 1041.8,418.9 1074.8,419.6 1105.8,421.4 1109.8,417.4 1104.8,412.4 1087.2,398.2 1049.5,369.2 1012.8,343.5 984.8,325.7 983.2,328.3 982.2,328.7 950.5,319.5 899.2,308.2 854.5,300.7 812.5,295.2 777.2,291.9 743.5,289.8 717.8,288.8" fill="#4c4c4c"/>
<polygon points="675.2,291.2 623.8,293.2 581.5,296.8 540.5,302.0 488.8,311.2 444.2,321.7 392.5,336.8 365.5,346.1 336.2,357.2 305.2,369.6 302.5,372.0 314.2,383.9 326.5,398.9 342.8,421.5 356.5,442.5 374.5,472.5 394.2,507.8 411.8,541.5 433.2,584.8 437.2,588.8 471.5,571.0 530.8,543.1 573.8,524.4 622.2,503.7 666.5,486.2 703.5,473.1 746.8,459.4 787.5,448.5 829.2,438.6 866.8,431.1 910.2,425.0 945.8,421.7 971.2,420.1 997.8,419.2 1041.8,418.9 1074.8,419.6 1105.8,421.4 1109.8,417.4 1104.8,412.4 1088.8,399.5 1053.2,372.0 1024.8,351.6 993.8,331.2 992.2,333.8 991.2,334.1 956.8,323.9 906.8,312.4 867.8,305.4 819.8,298.8 787.2,295.4 747.5,292.6 711.8,291.3" fill="#4e4e4e"/>
<polygon points="675.8,294.1 624.5,296.2 582.2,299.7 541.2,305.0 489.5,314.3 439.8,326.1 392.2,340.3 360.5,351.2 332.5,361.9 307.5,372.0 304.8,374.3 316.5,386.6 332.5,406.8 348.2,429.5 360.8,449.5 377.2,477.2 394.2,507.8 411.8,541.5 433.2,584.8 437.2,588.8 471.5,571.0 530.8,543.1 573.8,524.4 622.2,503.7 666.5,486.2 703.5,473.1 746.8,459.4 787.5,448.5 829.2,438.6 866.8,431.1 910.2,425.0 945.8,421.7 971.2,420.1 997.8,419.2 1041.8,418.9 1074.8,419.6 1105.8,421.4 1109.8,417.4 1104.8,412.4 1088.8,399.5 1053.2,372.0 1031.2,356.0 1003.5,337.3 1001.2,340.0 1000.5,340.0 963.5,328.6 920.8,318.3 873.8,309.3 827.8,302.7 787.5,298.3 753.5,295.9 712.2,294.2" fill="#505050"/>
<polygon points="670.5,297.3 623.5,299.4 578.8,303.3 534.8,309.3 486.5,318.3 438.8,329.8 392.5,343.7 368.5,351.8 338.2,363.2 309.5,374.6 307.5,376.9 318.2,388.6 332.5,406.8 348.2,429.5 360.8,449.5 377.2,477.2 394.2,507.8 411.8,541.5 433.2,584.8 437.2,588.8 471.5,571.0 530.8,543.1 573.8,524.4 622.2,503.7 666.5,486.2 703.5,473.1 746.8,459.4 787.5,448.5 829.2,438.6 866.8,431.1 910.2,425.0 945.8,421.7 971.2,420.1 997.8,419.2 1041.8,418.9 1074.8,419.6 1105.8,421.4 1109.8,417.4 1099.2,407.7 1070.5,385.2 1043.5,364.8 1012.8,343.5 1010.2,346.1 992.5,340.2 959.5,330.7 914.5,320.1 869.5,311.8 826.8,305.6 789.5,301.6 750.8,298.8 718.5,297.5" fill="#525252"/>
<polygon points="674.8,300.6 629.8,302.4 580.2,306.7 530.2,313.6 489.2,321.4 444.8,331.9 420.8,338.6 392.5,347.4 363.8,357.2 334.8,368.2 312.2,377.3 310.2,379.6 321.5,392.5 335.2,410.5 348.2,429.5 360.8,449.5 377.2,477.2 394.2,507.8 411.8,541.5 433.2,584.8 437.2,588.8 471.5,571.0 530.8,543.1 573.8,524.4 622.2,503.7 666.5,486.2 703.5,473.1 746.8,459.4 787.5,448.5 829.2,438.6 866.8,431.1 910.2,425.0 945.8,421.7 971.2,420.1 997.8,419.2 1041.8,418.9 1074.8,419.6 1105.8,421.4 1109.8,417.4 1099.2,407.7 1070.5,385.2 1043.5,364.8 1022.2,349.9 1020.8,351.9 1019.5,352.6 1006.8,348.1 971.8,337.4 930.5,326.9 882.2,317.3 840.8,310.8 795.8,305.4 755.5,302.3 715.2,300.7" fill="#545454"/>
<polygon points="674.5,304.1 630.2,306.0 583.5,310.0 553.5,313.8 528.8,317.7 489.8,325.1 441.8,336.7 390.2,352.1 360.8,362.3 336.5,371.5 315.5,379.9 312.8,382.2 324.2,395.9 336.8,412.8 348.2,429.5 360.8,449.5 377.2,477.2 394.2,507.8 411.8,541.5 433.2,584.8 437.2,588.8 471.5,571.0 530.8,543.1 573.8,524.4 622.2,503.7 666.5,486.2 703.5,473.1 746.8,459.4 787.5,448.5 829.2,438.6 866.8,431.1 910.2,425.0 945.8,421.7 971.2,420.1 997.8,419.2 1041.8,418.9 1074.8,419.6 1105.8,421.4 1109.8,417.4 1104.8,412.4 1074.8,388.6 1053.2,372.0 1032.5,357.0 1031.8,358.4 1030.2,359.7 1017.8,355.3 987.5,345.5 933.8,331.3 884.5,321.3 845.8,315.0 796.5,309.0 761.5,306.2 716.8,304.2" fill="#565656"/>
<polygon points="690.5,307.7 639.5,309.2 595.2,312.7 544.8,319.1 499.5,327.2 448.5,339.1 402.2,352.5 371.8,362.6 341.5,373.8 317.8,383.2 315.5,385.6 326.5,398.9 339.2,416.2 356.5,442.5 369.8,464.5 399.5,517.8 411.8,541.5 433.2,584.8 437.2,588.8 471.5,571.0 530.8,543.1 573.8,524.4 622.2,503.7 666.5,486.2 703.5,473.1 746.8,459.4 787.5,448.5 829.2,438.6 866.8,431.1 910.2,425.0 945.8,421.7 971.2,420.1 997.8,419.2 1041.8,418.9 1074.8,419.6 1105.8,421.4 1109.8,417.4 1104.8,412.4 1080.8,393.2 1042.8,364.5 1040.5,366.8 1039.8,366.8 1000.5,353.4 957.2,340.9 924.8,333.2 885.5,325.3 855.5,320.2 826.2,316.1 791.5,312.3 758.5,309.7 722.2,308.1" fill="#585858"/>
<polygon points="676.8,311.9 631.8,313.8 585.2,317.9 546.5,323.1 496.2,332.3 451.2,342.9 407.8,355.2 358.2,372.1 319.8,386.9 317.8,388.2 330.5,404.2 342.8,421.5 356.5,442.5 369.8,464.5 399.5,517.8 411.8,541.5 433.2,584.8 437.2,588.8 471.5,571.0 530.8,543.1 573.8,524.4 622.2,503.7 666.5,486.2 703.5,473.1 746.8,459.4 787.5,448.5 829.2,438.6 866.8,431.1 910.2,425.0 945.8,421.7 971.2,420.1 997.8,419.2 1041.8,418.9 1074.8,419.6 1105.8,421.4 1109.8,417.4 1104.8,412.4 1087.2,398.2 1053.5,372.3 1052.8,373.7 1051.2,375.0 1019.5,363.7 994.8,355.7 964.5,347.0 934.5,339.5 908.2,333.7 874.5,327.4 842.2,322.3 806.5,317.8 775.5,314.9 745.2,313.0 716.8,312.0" fill="#5a5a5a"/>
<polygon points="681.5,316.2 633.8,318.1 586.5,322.3 547.8,327.5 502.2,335.7 458.8,345.6 410.2,359.3 373.5,371.4 354.8,378.1 324.5,389.9 321.2,392.2 332.5,406.8 342.8,421.5 356.5,442.5 369.8,464.5 399.5,517.8 411.8,541.5 433.2,584.8 437.2,588.8 471.5,571.0 530.8,543.1 573.8,524.4 622.2,503.7 666.5,486.2 703.5,473.1 746.8,459.4 787.5,448.5 829.2,438.6 866.8,431.1 910.2,425.0 945.8,421.7 971.2,420.1 997.8,419.2 1041.8,418.9 1074.8,419.6 1105.8,421.4 1109.8,417.4 1099.2,407.7 1065.2,381.2 1062.5,383.6 1041.5,375.7 997.2,360.8 960.8,350.4 927.5,342.3 901.8,336.9 868.8,330.8 832.8,325.3 800.2,321.4 775.2,319.2 744.2,317.2 713.5,316.2" fill="#5c5c5c"/>
<polygon points="683.8,320.8 634.8,322.7 590.5,326.6 548.8,332.1 498.5,341.4 453.5,352.0 403.8,366.4 355.2,383.1 327.5,393.9 324.8,395.2 324.2,396.2 332.5,406.8 342.8,421.5 356.5,442.5 369.8,464.5 399.5,517.8 411.8,541.5 433.2,584.8 437.2,588.8 471.5,571.0 530.8,543.1 573.8,524.4 622.2,503.7 666.5,486.2 703.5,473.1 746.8,459.4 787.5,448.5 829.2,438.6 866.8,431.1 910.2,425.0 945.8,421.7 971.2,420.1 997.8,419.2 1041.8,418.9 1074.8,419.6 1105.8,421.4 1109.8,417.4 1104.8,412.4 1076.5,389.9 1074.2,392.7 1033.8,377.8 999.5,366.3 963.5,355.9 924.8,346.4 900.5,341.3 867.2,335.2 828.2,329.3 803.5,326.4 775.2,323.8 743.8,321.8 712.2,320.8" fill="#5e5e5e"/>
<polygon points="684.8,325.7 640.8,327.3 600.5,330.6 551.8,336.8 505.8,345.1 455.8,356.7 408.2,370.4 358.2,387.5 331.2,397.8 327.5,400.5 336.8,412.8 348.2,429.5 360.8,449.5 374.5,472.5 406.5,531.2 433.2,584.8 437.2,588.8 471.5,571.0 530.8,543.1 573.8,524.4 622.2,503.7 666.5,486.2 703.5,473.1 746.8,459.4 787.5,448.5 829.2,438.6 866.8,431.1 910.2,425.0 945.8,421.7 971.2,420.1 997.8,419.2 1041.8,418.9 1074.8,419.6 1105.8,421.4 1109.8,417.4 1104.8,412.4 1088.8,399.5 1086.5,402.3 1048.5,388.2 1000.8,371.8 957.5,359.4 907.2,347.6 880.5,342.4 853.5,337.9 800.8,331.0 771.5,328.4 744.5,326.7 712.5,325.7" fill="#606060"/>
<polygon points="685.5,331.0 641.8,332.6 598.2,336.2 552.8,342.2 506.8,350.5 459.5,361.4 420.2,372.4 370.5,388.8 334.2,402.5 330.5,404.5 336.8,412.8 348.2,429.5 360.8,449.5 374.5,472.5 406.5,531.2 433.2,584.8 437.2,588.8 471.5,571.0 530.8,543.1 573.8,524.4 622.2,503.7 666.5,486.2 703.5,473.1 746.8,459.4 787.5,448.5 829.2,438.6 866.8,431.1 910.2,425.0 945.8,421.7 971.2,420.1 997.8,419.2 1041.8,418.9 1074.8,419.6 1105.8,421.4 1109.8,417.4 1102.2,410.4 1099.5,412.4 1056.2,396.5 1007.5,379.5 955.2,364.2 926.8,357.3 899.5,351.4 869.8,345.8 843.2,341.5 794.8,335.6 767.5,333.3 737.5,331.6 713.2,331.0" fill="#626262"/>
<polygon points="687.5,336.6 637.5,338.6 593.2,342.5 553.8,347.8 504.8,356.8 458.2,367.8 412.8,380.8 364.5,397.1 338.2,407.2 334.2,409.5 351.8,435.2 374.5,472.5 406.5,531.2 433.2,584.8 437.2,588.8 471.5,571.0 519.5,548.0 563.2,529.1 608.8,509.4 651.8,491.7 687.5,478.5 732.2,463.8 777.2,451.2 812.5,442.4 855.8,433.1 895.8,426.9 932.5,422.7 971.2,420.1 1010.2,419.0 1054.2,419.2 1079.8,419.7 1092.8,420.6 1095.2,420.5 1095.8,418.2 1095.8,416.5 1067.2,406.3 1038.2,395.9 1001.2,383.3 951.5,368.9 924.2,362.3 893.2,355.8 841.2,346.9 813.5,343.2 788.2,340.6 737.5,337.3" fill="#646464"/>
<polygon points="693.8,342.6 650.5,343.9 603.8,347.5 553.2,354.2 507.8,362.5 463.5,372.8 420.8,384.8 368.8,402.2 341.5,412.5 337.8,414.5 356.5,442.5 378.5,479.5 406.5,531.2 433.2,584.8 437.2,588.8 471.5,571.0 519.5,548.0 563.2,529.1 608.8,509.4 651.8,491.7 687.5,478.5 732.2,463.8 770.8,452.8 808.2,443.4 848.8,434.4 884.8,428.4 926.5,423.3 966.2,420.4 1010.2,419.0 1041.8,418.9 1076.5,419.9 1076.5,415.8 1075.8,415.5 1043.8,404.3 1012.8,393.6 983.2,384.0 950.2,374.7 896.5,362.4 868.2,357.2 841.2,352.9 791.5,346.9 744.5,343.6" fill="#666666"/>
<polygon points="680.8,349.2 637.2,351.2 593.8,355.2 548.8,361.5 512.8,368.2 470.5,377.8 424.8,390.5 383.8,403.8 345.8,418.2 343.8,418.5 341.5,419.8 356.5,442.5 378.5,479.5 406.5,531.2 433.2,584.8 437.5,588.8 471.5,571.0 519.5,548.0 563.2,529.1 601.5,512.5 641.2,495.9 677.8,482.0 713.8,469.6 759.8,455.8 802.5,444.8 835.5,437.2 866.8,431.1 910.2,425.0 945.8,421.7 982.5,419.7 1010.2,419.0 1041.8,418.9 1056.5,419.5 1056.5,415.5 1027.8,405.4 988.5,392.4 936.5,377.8 913.5,372.4 882.5,366.1 831.2,357.8 779.5,352.2 733.8,349.5" fill="#686868"/>
<polygon points="701.5,355.8 659.2,356.8 616.2,359.8 591.2,362.5 564.2,366.2 521.8,373.5 479.5,382.8 431.5,395.8 404.8,404.2 379.5,412.8 350.8,423.5 345.8,426.2 360.8,449.5 378.5,479.5 406.5,531.2 433.2,584.8 437.5,588.8 471.5,571.0 511.8,551.3 547.5,535.9 591.8,516.7 629.8,500.5 671.2,484.4 713.8,469.6 746.8,459.4 787.5,448.5 824.5,439.6 855.8,433.1 895.8,426.9 932.5,422.7 966.2,420.4 997.8,419.2 1034.8,418.9 1034.8,414.9 987.8,399.3 955.5,389.7 930.2,383.2 900.2,376.5 876.2,371.8 834.8,365.2 788.8,359.8 745.2,356.9" fill="#6a6a6a"/>
<polygon points="679.5,363.5 637.8,365.5 598.2,369.2 554.8,375.2 511.8,383.2 467.8,393.5 429.8,404.2 378.5,421.2 352.8,430.8 350.2,432.8 369.8,464.5 384.5,490.2 411.8,541.5 433.2,584.8 437.5,588.8 471.5,571.0 511.8,551.3 547.5,535.9 591.8,516.7 629.8,500.5 666.5,486.2 703.5,473.1 738.8,461.8 777.2,451.2 812.5,442.4 848.8,434.4 884.8,428.4 920.8,423.8 949.5,421.4 982.5,419.7 1012.5,419.0 1012.5,415.0 983.2,405.5 955.5,397.2 901.8,384.1 852.8,375.1 811.5,369.5 763.5,365.2 726.5,363.5" fill="#6c6c6c"/>
<polygon points="690.2,371.2 646.8,372.8 607.2,376.2 561.5,382.2 515.8,390.5 470.2,401.2 432.2,411.8 377.2,430.2 357.8,437.5 354.5,439.8 372.2,468.5 394.2,507.8 411.8,541.5 433.2,584.8 437.5,588.8 471.5,571.0 511.8,551.3 547.5,535.9 585.5,519.4 622.2,503.7 651.8,491.7 687.5,478.5 724.5,466.2 753.8,457.5 791.5,447.5 829.2,438.6 866.8,431.1 902.8,425.9 932.5,422.7 961.5,420.7 990.5,419.5 990.2,417.1 989.2,415.4 953.5,404.7 905.8,392.8 880.8,387.7 851.8,382.8 810.2,377.2 770.8,373.5 731.8,371.5" fill="#6e6e6e"/>
<polygon points="698.8,379.5 649.2,381.2 609.2,384.5 565.5,390.2 525.8,397.2 490.8,404.8 464.5,411.5 437.5,419.2 397.2,432.2 364.2,444.5 361.2,445.2 358.8,446.5 374.5,472.5 394.2,507.8 411.8,541.5 433.2,584.8 437.5,588.8 460.5,576.6 501.5,556.1 543.8,537.4 573.8,524.4 608.8,509.4 641.2,495.9 677.8,482.0 713.8,469.6 753.8,457.5 787.5,448.5 812.5,442.4 848.8,434.4 884.8,428.4 910.2,425.0 945.8,421.7 965.5,420.7 965.5,416.7 936.2,408.4 884.2,396.6 845.2,390.1 812.8,385.8 774.8,382.2 739.8,380.2" fill="#707070"/>
<polygon points="701.2,388.5 662.8,389.5 620.5,392.5 573.5,398.2 532.5,405.2 492.5,413.8 463.8,421.2 440.5,427.8 393.5,443.2 366.2,453.2 363.8,454.8 378.5,479.5 396.8,512.8 411.8,541.5 433.2,584.8 437.5,588.8 460.5,576.6 501.5,556.1 543.8,537.4 573.8,524.4 608.8,509.4 641.2,495.9 671.2,484.4 703.5,473.1 759.8,455.8 791.5,447.5 824.5,439.6 855.8,433.1 884.8,428.4 910.2,425.0 940.2,422.2 939.8,419.9 938.8,418.2 922.2,413.9 875.5,403.8 836.5,397.7 801.2,393.5 770.8,390.8 740.5,389.2" fill="#727272"/>
<polygon points="699.8,398.2 663.5,399.2 621.5,402.2 579.5,407.2 537.5,414.2 492.8,423.8 449.2,435.5 423.2,443.5 391.8,454.2 372.2,461.5 369.2,463.8 384.5,490.2 399.5,517.8 411.8,541.5 433.2,584.8 437.5,588.8 460.5,576.6 501.5,556.1 554.2,533.1 585.5,519.4 622.2,503.7 677.8,482.0 713.8,469.6 738.8,461.8 770.8,452.8 802.5,444.8 855.8,433.1 884.8,428.4 911.8,425.1 911.8,421.1 910.5,420.7 866.5,411.6 827.2,406.0 791.8,402.1 766.8,400.1 731.5,398.5" fill="#747474"/>
<polygon points="704.8,408.5 665.2,409.5 623.2,412.5 576.5,418.2 537.5,424.8 496.2,433.8 450.2,446.2 399.8,462.5 378.2,470.5 374.5,472.8 386.2,493.2 402.8,524.2 433.2,584.8 437.5,588.8 460.5,576.6 501.5,556.1 554.2,533.1 608.8,509.4 666.5,486.2 724.5,466.2 777.2,451.2 808.2,443.4 835.5,437.2 866.8,431.1 883.8,428.7 882.8,425.0 850.5,419.2 814.2,414.6 788.5,412.1 756.2,409.8 731.8,408.8" fill="#767676"/>
<polygon points="688.8,419.8 650.8,421.5 615.8,424.5 574.5,429.8 534.8,436.8 491.8,446.5 456.2,456.2 431.2,463.8 404.5,472.8 383.5,480.5 380.5,482.2 380.2,482.8 406.5,531.2 433.2,584.8 437.5,588.8 460.5,576.6 501.5,556.1 543.8,537.4 595.8,515.0 651.8,491.7 703.5,473.1 753.8,457.5 808.2,443.4 835.5,437.2 851.8,434.1 850.8,430.4 849.8,430.1 824.5,426.7 794.8,423.6 765.8,421.4 739.2,420.1" fill="#787878"/>
<polygon points="688.5,431.8 646.8,433.9 610.8,437.2 571.8,442.5 528.5,450.5 483.5,461.2 446.2,471.8 404.2,485.8 390.5,490.8 386.5,492.8 386.2,493.5 411.8,541.5 433.2,584.8 437.5,588.8 471.5,571.0 530.8,543.1 585.5,519.4 629.8,500.5 677.8,482.0 724.5,466.2 770.8,452.8 802.5,444.8 818.2,441.4 817.2,437.7 780.8,434.2 756.2,432.6 730.2,431.7" fill="#7a7a7a"/>
<polygon points="704.5,444.4 662.2,445.9 623.8,448.9 581.5,454.2 544.8,460.5 506.5,468.8 466.2,479.5 437.8,488.2 413.2,496.5 395.8,502.8 392.8,504.5 392.5,505.2 411.8,541.5 433.2,584.8 437.5,588.8 471.5,571.0 519.5,548.0 563.2,529.1 608.8,509.4 651.8,491.7 703.5,473.1 746.8,459.4 779.5,450.8 778.8,446.8 744.8,444.8" fill="#7c7c7c"/>
<polygon points="698.2,458.5 662.2,460.0 621.5,463.5 582.8,468.3 544.8,474.9 508.5,482.8 468.5,493.5 422.5,508.2 402.2,515.5 398.8,517.2 411.8,541.5 433.2,584.8 437.5,588.8 471.5,571.0 511.8,551.3 547.5,535.9 591.8,516.7 629.8,500.5 666.5,486.2 703.5,473.1 739.2,461.8 737.8,458.4" fill="#7e7e7e"/>
<polygon points="649.5,476.3 614.8,480.0 578.8,484.8 540.8,491.4 504.5,499.5 469.2,509.2 430.5,521.5 405.8,530.5 411.8,541.5 433.2,584.8 437.5,588.8 460.5,576.6 501.5,556.1 563.2,529.1 595.8,515.0 629.8,500.5 666.5,486.2 691.8,477.2 690.5,473.8" fill="#808080"/>
<polygon points="608.5,497.9 585.2,501.4 556.5,506.0 522.2,512.5 498.2,518.2 469.8,526.2 430.8,538.8 413.5,545.2 433.2,584.8 437.5,588.8 460.5,576.6 501.5,556.1 543.8,537.4 595.8,515.0 637.5,497.6 636.2,494.3" fill="#828282"/>
<polygon points="529.5,529.9 492.8,538.3 454.2,549.9 425.2,559.8 424.8,560.5 421.8,561.8 433.2,584.8 437.5,588.8 460.5,576.6 501.5,556.1 543.8,537.4 570.5,526.1 570.8,525.4 569.5,522.7" fill="#848484"/>
<polygon points="443.8,573.9 434.5,577.2 430.5,579.2 433.2,584.8 437.5,588.8 460.5,576.6 483.8,565.1 484.2,564.4 482.8,561.7" fill="#868686"/>
</g>
<g stroke="#ffff00" stroke-width="1.9" fill="none" stroke-linecap="round">
<line x1="269.7" y1="340.5" x2="434.9" y2="567.2" />
<line x1="434.9" y1="567.2" x2="1108.1" y2="402.5" />
<line x1="434.9" y1="567.2" x2="448.6" y2="675.8" />
<line x1="269.7" y1="340.5" x2="282.0" y2="416.4" />
<line x1="282.0" y1="416.4" x2="448.6" y2="675.8" />
<line x1="448.6" y1="675.8" x2="1099.7" y2="495.5" />
<line x1="1108.1" y1="402.5" x2="1099.7" y2="495.5" />
</g>
<line x1="630.9" y1="125.3" x2="639.5" y2="293.4" stroke="#8080ff" stroke-width="3"/>
<polygon points="460.8,344.4 461.0,341.0 461.3,337.5 461.6,334.0 462.0,330.5 462.5,327.0 463.0,323.5 463.6,320.0 464.2,316.4 464.9,312.9 465.7,309.4 466.5,306.0 467.4,302.5 468.3,299.0 469.3,295.5 470.4,292.1 471.5,288.6 472.7,285.2 473.9,281.8 475.2,278.4 476.6,275.0 478.0,271.6 479.5,268.3 481.1,265.0 482.6,261.7 484.3,258.4 486.0,255.1 487.8,251.9 489.6,248.7 491.4,245.6 493.4,242.4 495.3,239.3 497.4,236.3 499.4,233.2 501.6,230.2 503.7,227.3 506.0,224.3 508.2,221.5 510.5,218.6 512.9,215.8 515.3,213.1 517.8,210.3 520.2,207.7 522.8,205.0 525.3,202.5 528.0,199.9 530.6,197.5 533.3,195.0 536.0,192.6 538.8,190.3 541.6,188.0 544.4,185.8 547.2,183.7 550.1,181.5 553.0,179.5 556.0,177.5 559.0,175.5 562.0,173.7 565.0,171.8 568.0,170.1 571.1,168.4 574.2,166.7 577.3,165.1 580.4,163.6 583.5,162.1 586.7,160.7 589.9,159.4 593.0,158.1 596.2,156.9 599.4,155.8 602.7,154.7 605.9,153.7 609.1,152.7 612.4,151.8 615.6,151.0 618.8,150.2 622.1,149.5 625.3,148.9 628.6,148.4 631.8,147.9 635.1,147.4 638.3,147.1 641.5,146.8 644.8,146.5 648.0,146.4 651.2,146.2 654.4,146.2 657.6,146.2 660.7,146.3 663.9,146.5 667.0,146.7 670.2,147.0 673.3,147.3 676.4,147.7 679.5,148.2 682.5,148.7 685.6,149.3 688.6,150.0 691.6,150.7 694.5,151.4 697.5,152.3 700.4,153.2 703.3,154.1 706.1,155.1 709.0,156.2 711.8,157.3 714.5,158.5 717.3,159.8 720.0,161.1 722.7,162.4 725.3,163.8 727.9,165.3 730.5,166.8 733.0,168.3 735.5,169.9 738.0,171.6 740.4,173.3 742.8,175.1 745.2,176.9 747.5,178.7 749.8,180.6 752.0,182.6 754.2,184.6 756.3,186.6 758.4,188.7 760.5,190.8 762.5,193.0 764.5,195.2 766.4,197.4 768.3,199.7 770.1,202.1 771.9,204.4 773.6,206.8 775.3,209.2 777.0,211.7 778.6,214.2 780.2,216.7 781.7,219.3 783.1,221.9 784.5,224.5 785.9,227.2 787.2,229.9 788.5,232.6 789.7,235.3 790.9,238.1 792.0,240.9 793.0,243.7 794.1,246.5 795.0,249.4 795.9,252.2 796.8,255.1 797.6,258.0 798.4,261.0 799.1,263.9 799.8,266.9 800.4,269.9 800.9,272.9 801.5,275.9 801.9,278.9 802.3,281.9 802.3,281.9 800.7,281.9 799.0,281.9 797.4,281.9 795.7,281.9 794.1,281.9 792.4,281.9 790.8,281.9 789.1,281.9 787.4,281.9 785.8,281.9 784.1,281.9 784.1,281.9 783.6,279.3 783.1,276.7 782.6,274.1 782.0,271.6 781.3,269.0 780.6,266.5 779.9,264.0 779.2,261.5 778.3,259.0 777.5,256.5 776.6,254.1 775.7,251.7 774.7,249.3 773.7,246.9 772.6,244.5 771.5,242.2 770.3,239.9 769.2,237.6 767.9,235.3 766.7,233.1 765.4,230.9 764.0,228.7 762.6,226.5 761.2,224.4 759.7,222.3 758.2,220.2 756.7,218.2 755.1,216.2 753.5,214.2 751.8,212.3 750.1,210.3 748.4,208.5 746.6,206.6 744.8,204.8 743.0,203.1 741.1,201.3 739.2,199.6 737.3,198.0 735.3,196.4 733.3,194.8 731.2,193.3 729.2,191.8 727.1,190.3 724.9,188.9 722.7,187.5 720.6,186.2 718.3,184.9 716.1,183.7 713.8,182.5 711.5,181.3 709.1,180.2 706.8,179.2 704.4,178.2 702.0,177.2 699.5,176.3 697.1,175.4 694.6,174.6 692.1,173.9 689.5,173.1 687.0,172.5 684.4,171.9 681.8,171.3 679.2,170.8 676.6,170.3 674.0,169.9 671.3,169.5 668.6,169.2 665.9,169.0 663.3,168.8 660.5,168.6 657.8,168.5 655.1,168.5 652.4,168.5 649.6,168.6 646.8,168.7 644.1,168.9 641.3,169.1 638.5,169.4 635.8,169.7 633.0,170.1 630.2,170.5 627.4,171.0 624.6,171.6 621.9,172.2 619.1,172.9 616.3,173.6 613.5,174.3 610.8,175.2 608.0,176.0 605.2,177.0 602.5,177.9 599.8,179.0 597.0,180.1 594.3,181.2 591.6,182.4 588.9,183.6 586.2,184.9 583.6,186.3 580.9,187.7 578.3,189.1 575.7,190.6 573.1,192.1 570.5,193.7 568.0,195.4 565.4,197.0 562.9,198.8 560.4,200.6 558.0,202.4 555.5,204.3 553.1,206.2 550.7,208.1 548.4,210.1 546.1,212.2 543.8,214.3 541.5,216.4 539.3,218.5 537.1,220.8 534.9,223.0 532.8,225.3 530.7,227.6 528.6,230.0 526.6,232.4 524.6,234.8 522.6,237.2 520.7,239.7 518.9,242.3 517.0,244.8 515.2,247.4 513.5,250.0 511.8,252.6 510.1,255.3 508.5,258.0 506.9,260.7 505.4,263.5 503.9,266.2 502.4,269.0 501.0,271.8 499.7,274.7 498.4,277.5 497.1,280.4 495.9,283.3 494.8,286.2 493.6,289.1 492.6,292.0 491.6,294.9 490.6,297.9 489.7,300.8 488.8,303.8 488.0,306.8 487.2,309.8 486.5,312.8 485.8,315.8 485.2,318.8 484.7,321.8 484.2,324.8 483.7,327.8 483.3,330.8 482.9,333.8 482.6,336.8 482.6,336.8 480.6,337.4 478.7,338.1 476.7,338.8 474.7,339.5 472.7,340.2 470.8,340.9 468.8,341.6 466.8,342.3 464.8,343.0 462.8,343.7 460.8,344.4" fill="rgba(207,106,109,0.75)" shape-rendering="crispEdges"/>
<clipPath id="rc"><rect x="600" y="140" width="60" height="35"/></clipPath>
<g clip-path="url(#rc)"><clipPath id="rc2"><polygon points="460.8,344.4 461.6,334.0 463.0,323.5 464.9,312.9 467.4,302.5 470.4,292.1 473.9,281.8 478.0,271.6 482.6,261.7 487.8,251.9 493.4,242.4 499.4,233.2 506.0,224.3 512.9,215.8 520.2,207.7 528.0,199.9 536.0,192.6 544.4,185.8 553.0,179.5 562.0,173.7 571.1,168.4 580.4,163.6 589.9,159.4 599.4,155.8 609.1,152.7 618.8,150.2 628.6,148.4 638.3,147.1 648.0,146.4 657.6,146.2 667.0,146.7 676.4,147.7 685.6,149.3 694.5,151.4 703.3,154.1 711.8,157.3 720.0,161.1 727.9,165.3 735.5,169.9 742.8,175.1 749.8,180.6 756.3,186.6 762.5,193.0 768.3,199.7 773.6,206.8 778.6,214.2 783.1,221.9 787.2,229.9 790.9,238.1 794.1,246.5 796.8,255.1 799.1,263.9 800.9,272.9 802.3,281.9 799.0,281.9 794.1,281.9 789.1,281.9 784.1,281.9 783.1,276.7 781.3,269.0 779.2,261.5 776.6,254.1 773.7,246.9 770.3,239.9 766.7,233.1 762.6,226.5 758.2,220.2 753.5,214.2 748.4,208.5 743.0,203.1 737.3,198.0 731.2,193.3 724.9,188.9 718.3,184.9 711.5,181.3 704.4,178.2 697.1,175.4 689.5,173.1 681.8,171.3 674.0,169.9 665.9,169.0 657.8,168.5 649.6,168.6 641.3,169.1 633.0,170.1 624.6,171.6 616.3,173.6 608.0,176.0 599.8,179.0 591.6,182.4 583.6,186.3 575.7,190.6 568.0,195.4 560.4,200.6 553.1,206.2 546.1,212.2 539.3,218.5 532.8,225.3 526.6,232.4 520.7,239.7 515.2,247.4 510.1,255.3 505.4,263.5 501.0,271.8 497.1,280.4 493.6,289.1 490.6,297.9 488.0,306.8 485.8,315.8 484.2,324.8 482.9,333.8 480.6,337.4 474.7,339.5 468.8,341.6 462.8,343.7"/></clipPath>
<line x1="631.5" y1="125.3" x2="640.1" y2="293.4" stroke="#8080ff" stroke-width="1.1" clip-path="url(#rc2)"/>
</g>
</svg>
<div class="edge"></div>
</body></html>
